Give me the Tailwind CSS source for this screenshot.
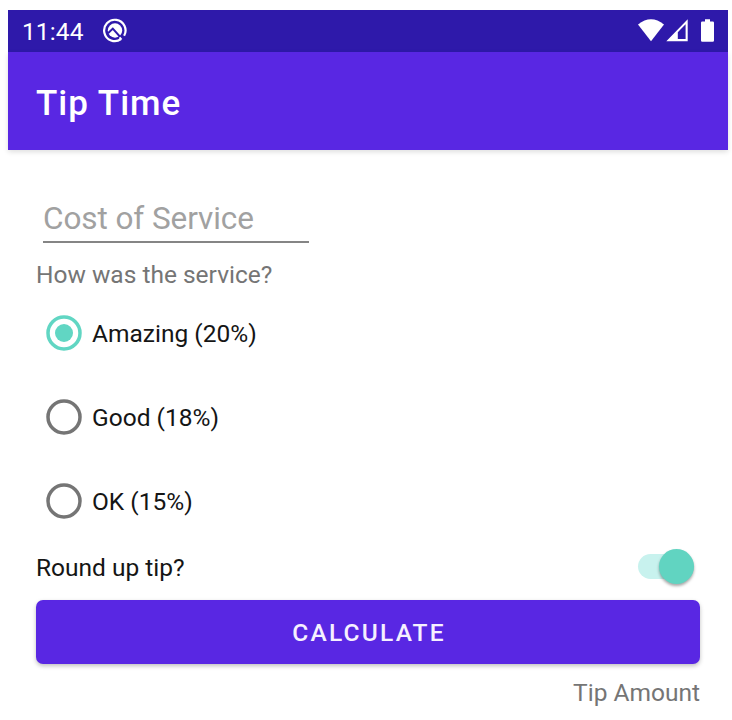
<!DOCTYPE html>
<html lang="en">
<head>
<meta charset="utf-8">
<title>Tip Time</title>
<script src="https://cdn.jsdelivr.net/npm/@tailwindcss/browser@4"></script>
</head>
<body class="h-[720px] overflow-hidden bg-white pl-2 pr-1 pt-2.5 font-[Roboto,sans-serif] text-[24.5px] text-[#151515]">
  <div class="flex h-[42px] items-center bg-[#2e19aa] pl-[14px] text-white">
    <span class="w-[80px] pt-[2px] text-[24.5px] leading-7 tracking-[0.1px]">11:44</span>
    <svg class="h-[26px] w-[26px]" viewBox="0 0 26 26" fill="none">
      <path d="M19 21.200A10.700 10.700 0 1 1 22.100 17.800" stroke="#fff" stroke-width="2.200"/>
      <circle cx="13" cy="12.500" r="7.200" fill="#fff"/>
      <path d="M6 15.200L10.800 10.600L20.500 21.500" stroke="#2e19aa" stroke-width="2"/>
      <path d="M17.500 19.300L19.500 21.600" stroke="#fff" stroke-width="2"/>
    </svg>
    <svg class="ml-auto h-[42px] w-[94px]" viewBox="0 0 94 42" fill="#fff">
      <path d="M4 14.500Q17 4 30 14.500L17 31.200Z"/>
      <path fill-rule="evenodd" d="M32.300 31.300L53.700 9.200V31.300ZM43.800 22.300V29.100H51.600V14.300Z"/>
      <path d="M71 9.200h5v2.300h2.700q1.300 0 1.300 1.300v17.600q0 1.300-1.300 1.300h-10.400q-1.300 0-1.300-1.300v-17.600q0-1.300 1.300-1.300h2.700z"/>
    </svg>
  </div>
  <header class="flex h-[98px] items-center bg-[#5927e3] pl-7 text-white shadow-[0_2px_5px_rgba(0,0,0,0.13)]">
    <h1 class="pt-[6px] text-[35px] font-medium leading-[42px] tracking-[1px]">Tip Time</h1>
  </header>
  <main class="px-7 pt-[41px]">
    <div class="ml-[7px] h-[52px] w-[266px] border-b-2 border-[#858585] pt-[7px]">
      <div class="text-[31.5px] leading-[42px] tracking-[-0.08px] text-[#a1a1a1]">Cost of Service</div>
    </div>
    <p class="mt-[15px] h-[33px] leading-[34px] text-[#757575]">How was the service?</p>
    <div class="flex h-[84px] items-center pl-[10px]">
      <svg class="size-9" viewBox="0 0 36 36"><circle cx="18" cy="18" r="16" fill="none" stroke="#61d6c3" stroke-width="3.500"/><circle cx="18" cy="18" r="9" fill="#61d6c3"/></svg>
      <span class="ml-[10px] pt-[2px]">Amazing (20%)</span>
    </div>
    <div class="flex h-[84px] items-center pl-[10px]">
      <svg class="size-9" viewBox="0 0 36 36"><circle cx="18" cy="18" r="16" fill="none" stroke="#757575" stroke-width="3.500"/></svg>
      <span class="ml-[10px] pt-[2px]">Good (18%)</span>
    </div>
    <div class="flex h-[84px] items-center pl-[10px]">
      <svg class="size-9" viewBox="0 0 36 36"><circle cx="18" cy="18" r="16" fill="none" stroke="#757575" stroke-width="3.500"/></svg>
      <span class="ml-[10px] pt-[2px]">OK (15%)</span>
    </div>
    <div class="flex h-[48px] items-center justify-between pr-[6px]">
      <span class="pt-[2px]">Round up tip?</span>
      <span class="mb-[2px] flex h-[25px] w-[56px] items-center justify-end rounded-full bg-[#c8f2ee]">
        <span class="size-[35px] rounded-full bg-[#61d4c1] shadow-[0_2px_3px_rgba(0,0,0,0.35)]"></span>
      </span>
    </div>
    <button class="mt-[9px] flex h-16 w-full items-center justify-center rounded-[7px] bg-[#5927e3] pl-[2px] pt-[2px] font-medium tracking-[2.2px] text-[#f6f0ff] shadow-[0_2px_4px_rgba(0,0,0,0.25)]">CALCULATE</button>
    <p class="mt-3 text-right leading-[34px] text-[#757575]">Tip Amount</p>
  </main>
</body>
</html>
